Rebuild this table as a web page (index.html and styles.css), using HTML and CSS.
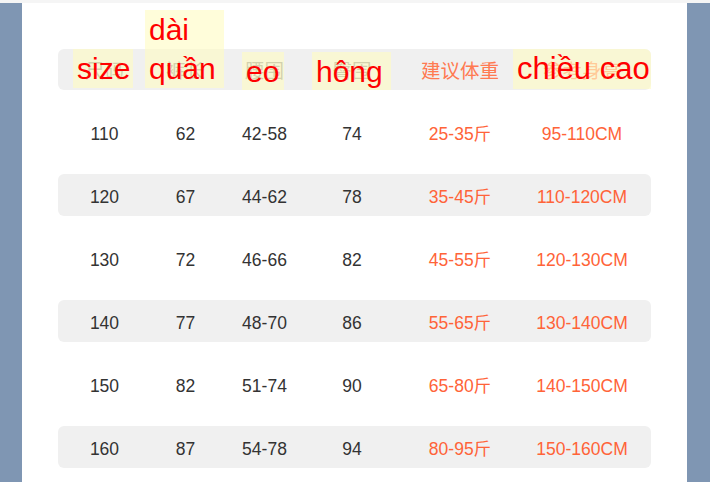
FILE: index.html
```html
<!DOCTYPE html>
<html lang="zh">
<head>
<meta charset="utf-8">
<title>尺码表</title>
<link rel="stylesheet" href="styles.css">
</head>
<body>
<div class="frame">
  <div class="panel">
    <div class="table">
      <div class="row head">
        <span>尺码</span><span>裤长</span><span>腰围</span><span>臀围</span><span class="hot">建议体重</span><span class="hot">参考身高</span>
        <div class="note n-size">size</div>
        <div class="note n-len">dài<br>quần</div>
        <div class="note n-eo">eo</div>
        <div class="note n-hong">hông</div>
        <div class="note n-cao">chiều cao</div>
      </div>
      <div class="row"><span>110</span><span>62</span><span>42-58</span><span>74</span><span class="hot">25-35斤</span><span class="hot">95-110CM</span></div>
      <div class="row alt"><span>120</span><span>67</span><span>44-62</span><span>78</span><span class="hot">35-45斤</span><span class="hot">110-120CM</span></div>
      <div class="row"><span>130</span><span>72</span><span>46-66</span><span>82</span><span class="hot">45-55斤</span><span class="hot">120-130CM</span></div>
      <div class="row alt"><span>140</span><span>77</span><span>48-70</span><span>86</span><span class="hot">55-65斤</span><span class="hot">130-140CM</span></div>
      <div class="row"><span>150</span><span>82</span><span>51-74</span><span>90</span><span class="hot">65-80斤</span><span class="hot">140-150CM</span></div>
      <div class="row alt"><span>160</span><span>87</span><span>54-78</span><span>94</span><span class="hot">80-95斤</span><span class="hot">150-160CM</span></div>
    </div>
  </div>
</div>
</body>
</html>
```
FILE: styles.css
```css
html, body {
  margin: 0;
  padding: 0;
  height: 100%;
  background: #f5f5f5;
  overflow: hidden;
}
.frame {
  margin-top: 3px;
  height: 479px;
  background: #7f96b3;
  padding: 0 23px 0 22px;
  box-sizing: border-box;
}
.panel {
  background: #ffffff;
  height: 100%;
  padding: 46px 0 0 36px;
  box-sizing: border-box;
}
.table {
  width: 593px;
  display: flex;
  flex-direction: column;
  gap: 21px;
}
.row {
  position: relative;
  height: 42px;
  box-sizing: border-box;
  padding-top: 3px;
  display: grid;
  grid-template-columns: 93px 69px 89px 86px 130px 114px;
  align-items: center;
  border-radius: 6px;
  font-family: "Liberation Sans", "Noto Sans CJK SC", sans-serif;
  font-size: 17.5px;
  line-height: 20px;
  color: #333333;
}
.row span {
  display: block;
  height: 20px;
  text-align: center;
  white-space: nowrap;
}
.row .hot {
  color: #ff6338;
}
.alt {
  background: #f0f0f0;
}
.head {
  background: #f0f0f0;
  height: 41px;
  padding-top: 0;
  font-family: "Noto Sans CJK SC", "Liberation Sans", sans-serif;
  font-size: 19.5px;
  line-height: 22px;
  color: #8a8a8a;
}
.head span {
  height: 22px;
}
.head .hot {
  color: #ff7a52;
}
.note {
  position: absolute;
  box-sizing: border-box;
  padding-left: 4px;
  background: rgba(255, 251, 196, 0.62);
  color: #ff0000;
  font-family: "Liberation Sans", sans-serif;
  font-size: 30px;
  line-height: 39px;
  white-space: nowrap;
}
.n-size { left: 15px; top: 0; width: 60px; height: 39px; }
.n-len { left: 87px; top: -39px; width: 79px; height: 78px; }
.n-eo { left: 184px; top: 3px; width: 42px; height: 38px; }
.n-hong { left: 254px; top: 3px; width: 79px; height: 38px; }
.n-cao { left: 455px; top: 0; width: 138px; height: 40px; border-radius: 0 6px 0 0; font-size: 31px; }
```
